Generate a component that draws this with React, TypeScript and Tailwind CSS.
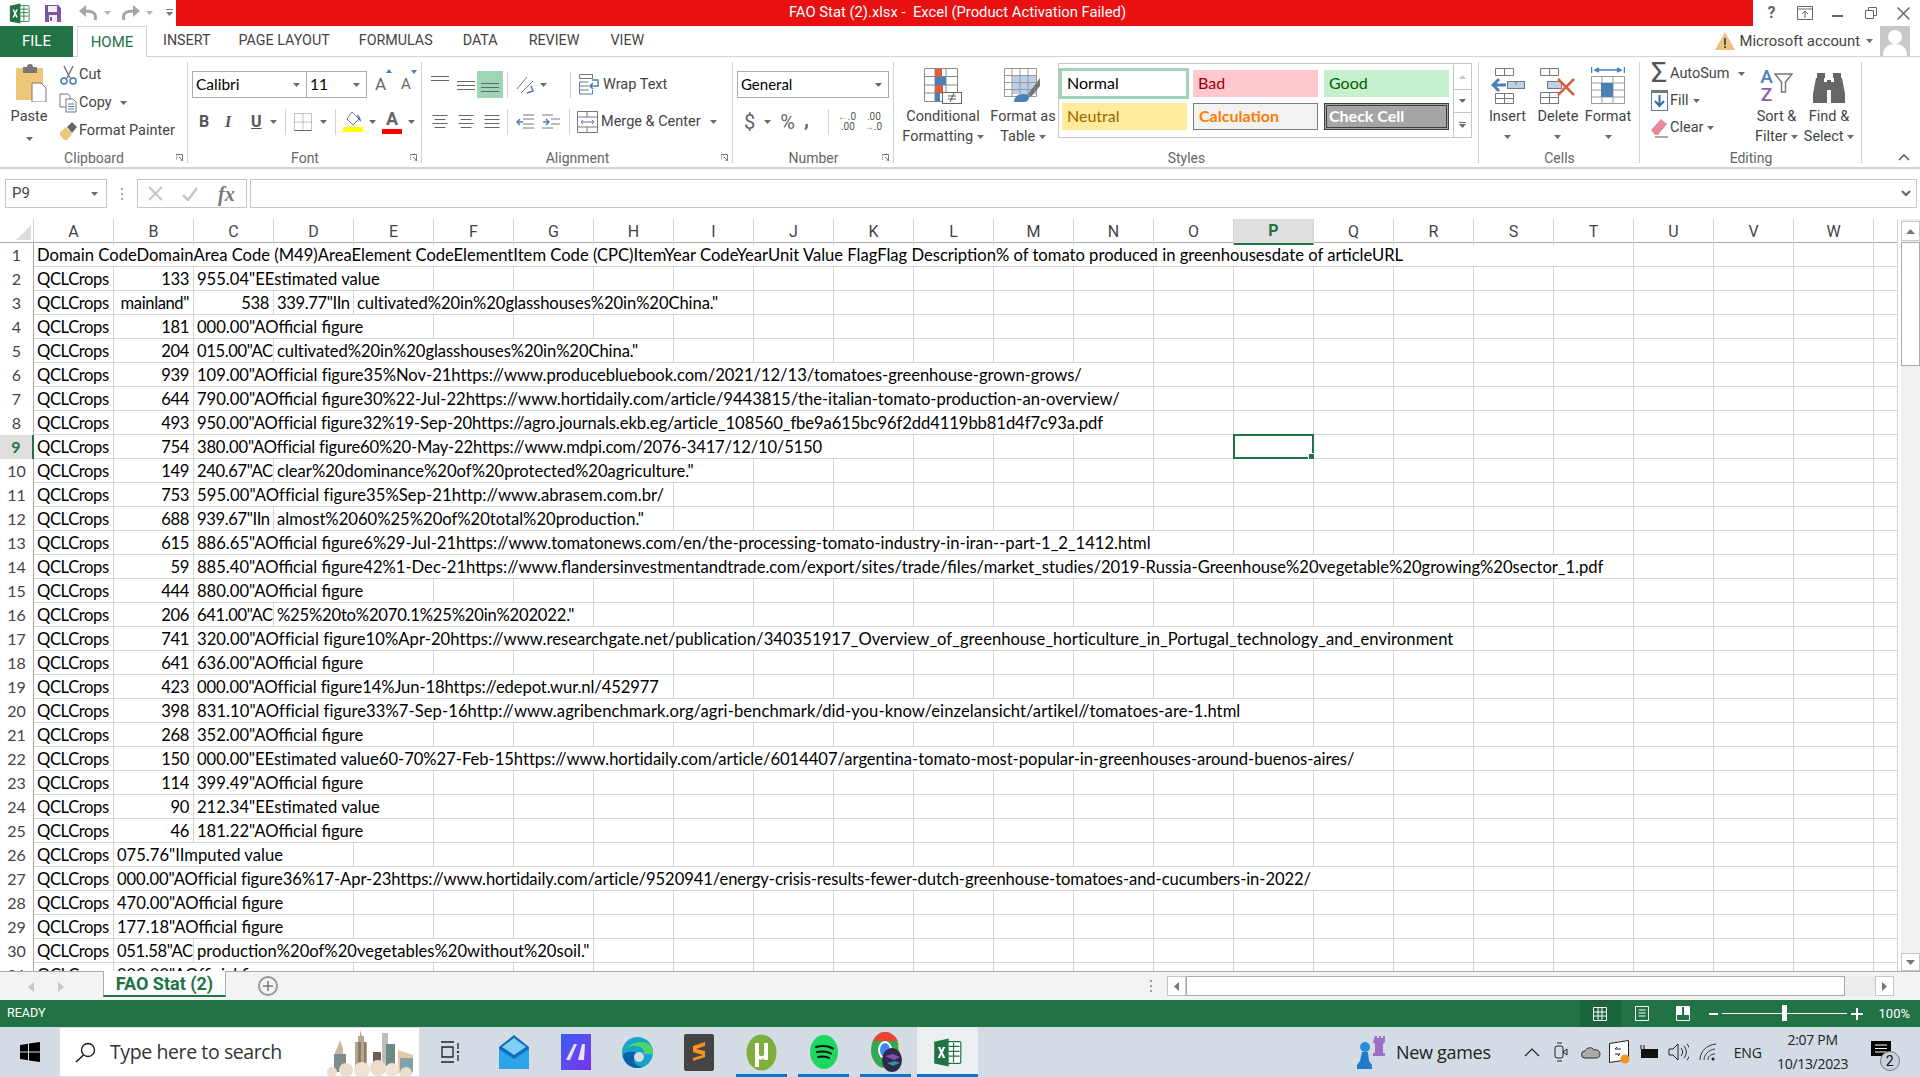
import type { ReactNode } from "react";

type Cell = [number, string, ("r" | "")?, string?];

const QCL: Cell = [1, "QCLCrops"];
const off = (n: string, v: string, span = 3, cls = ""): Cell[] => [QCL, [1, n, "r"], [span, v, "", cls]];

const rows: Cell[][] = [
  [[20, "Domain CodeDomainArea Code (M49)AreaElement CodeElementItem Code (CPC)ItemYear CodeYearUnit Value FlagFlag Description% of tomato produced in greenhousesdate of articleURL"]],
  off("133", '955.04"EEstimated value'),
  [QCL, [1, 'mainland"', "r"], [1, "538", "r"], [1, '339.77"IIn'], [5, 'cultivated%20in%20glasshouses%20in%20China."', "", "tracking-[-0.08px]"]],
  off("181", '000.00"AOfficial figure'),
  [QCL, [1, "204", "r"], [1, '015.00"AC'], [5, 'cultivated%20in%20glasshouses%20in%20China."', "", "tracking-[-0.08px]"]],
  off("939", '109.00"AOfficial figure35%Nov-21https://www.producebluebook.com/2021/12/13/tomatoes-greenhouse-grown-grows/', 12, "tracking-[-0.04px]"),
  off("644", '790.00"AOfficial figure30%22-Jul-22https://www.hortidaily.com/article/9443815/the-italian-tomato-production-an-overview/', 12),
  off("493", '950.00"AOfficial figure32%19-Sep-20https://agro.journals.ekb.eg/article_108560_fbe9a615bc96f2dd4119bb81d4f7c93a.pdf', 12, "tracking-[-0.08px]"),
  off("754", '380.00"AOfficial figure60%20-May-22https://www.mdpi.com/2076-3417/12/10/5150', 9, "tracking-[-0.19px]"),
  [QCL, [1, "149", "r"], [1, '240.67"AC'], [6, 'clear%20dominance%20of%20protected%20agriculture."']],
  off("753", '595.00"AOfficial figure35%Sep-21http://www.abrasem.com.br/', 6, "tracking-[0.07px]"),
  [QCL, [1, "688", "r"], [1, '939.67"IIn'], [5, 'almost%2060%25%20of%20total%20production."']],
  off("615", '886.65"AOfficial figure6%29-Jul-21https://www.tomatonews.com/en/the-processing-tomato-industry-in-iran--part-1_2_1412.html', 13),
  off("59", '885.40"AOfficial figure42%1-Dec-21https://www.flandersinvestmentandtrade.com/export/sites/trade/files/market_studies/2019-Russia-Greenhouse%20vegetable%20growing%20sector_1.pdf', 18),
  off("444", '880.00"AOfficial figure'),
  [QCL, [1, "206", "r"], [1, '641.00"AC'], [4, '%25%20to%2070.1%25%20in%202022."', "", "tracking-[-0.2px]"]],
  off("741", '320.00"AOfficial figure10%Apr-20https://www.researchgate.net/publication/340351917_Overview_of_greenhouse_horticulture_in_Portugal_technology_and_environment', 16, "tracking-[0.05px]"),
  off("641", '636.00"AOfficial figure'),
  off("423", '000.00"AOfficial figure14%Jun-18https://edepot.wur.nl/452977', 6, "tracking-[-0.1px]"),
  off("398", '831.10"AOfficial figure33%7-Sep-16http://www.agribenchmark.org/agri-benchmark/did-you-know/einzelansicht/artikel//tomatoes-are-1.html', 14, "tracking-[0.07px]"),
  off("268", '352.00"AOfficial figure'),
  off("150", '000.00"EEstimated value60-70%27-Feb-15https://www.hortidaily.com/article/6014407/argentina-tomato-most-popular-in-greenhouses-around-buenos-aires/', 15, "tracking-[-0.03px]"),
  off("114", '399.49"AOfficial figure'),
  off("90", '212.34"EEstimated value'),
  off("46", '181.22"AOfficial figure'),
  [QCL, [3, '075.76"IImputed value']],
  [QCL, [16, '000.00"AOfficial figure36%17-Apr-23https://www.hortidaily.com/article/9520941/energy-crisis-results-fewer-dutch-greenhouse-tomatoes-and-cucumbers-in-2022/', "", "tracking-[-0.08px]"]],
  [QCL, [3, '470.00"AOfficial figure']],
  [QCL, [3, '177.18"AOfficial figure']],
  [QCL, [1, '051.58"AC'], [5, 'production%20of%20vegetables%20without%20soil."']],
  [QCL, [3, '000.00"AOfficial figure']],
];

const letters = "ABCDEFGHIJKLMNOPQRSTUVW".split("");

const Caret = ({ className = "" }: { className?: string }) => (
  <svg width="7" height="4" viewBox="0 0 7 4" className={className}>
    <path d="M0 0h7L3.5 4z" fill="#6a6a6a" />
  </svg>
);

const Launcher = () => (
  <svg width="7" height="7" viewBox="0 0 7 7" className="absolute right-[5px] bottom-[6px]">
    <path d="M0 .5h6.5V7M0 0v6M3 3l4 4M4 7h3V4" stroke="#777" fill="none" />
  </svg>
);

const Group = ({ w, label, launcher, children }: { w: string; label: string; launcher?: boolean; children: ReactNode }) => (
  <div className={`${w} relative flex flex-col shrink-0`}>
    <div className="absolute right-0 top-[5px] bottom-[4px] w-px bg-[#d4d4d4]" />
    <div className="h-[92px] shrink-0 relative">{children}</div>
    <div className="h-[18px] shrink-0 flex items-center justify-center text-[14px] text-[#666]">{label}</div>
    {launcher && <Launcher />}
  </div>
);

const Lines = ({ widths, top = 0 }: { widths: number[]; top?: number }) => (
  <svg width="20" height="20" viewBox="0 0 20 20">
    {widths.map((w, i) => (
      <rect key={i} x={(20 - w) / 2} y={top + i * 4} width={w} height="1" fill="#666" />
    ))}
  </svg>
);

const Sep = () => <div className="w-px h-[26px] bg-[#d4d4d4]" />;

const ExcelLogo = ({ size = 24 }: { size?: number }) => (
  <svg width={size} height={size} viewBox="0 0 24 24">
    <rect x="10" y="3" width="13" height="18" rx="1" fill="#fff" stroke="#217346" />
    <path d="M13 7h9M13 11h9M13 15h9M17 4v16" stroke="#217346" />
    <path d="M1 3l12-2.5v23L1 21z" fill="#217346" />
    <path d="M4 7.5h2l1 2.7 1.2-2.7h1.900L8 12l2.200 4.500H8.200L7 13.600l-1.200 2.900H3.900L6 12z" fill="#fff" />
  </svg>
);

const WinBtn = ({ children }: { children: ReactNode }) => <div className="w-[33px] flex justify-center items-center">{children}</div>;

const TitleBar = () => (
  <div className="h-[26px] flex shrink-0">
    <div className="w-[176px] flex items-center shrink-0 pl-[9px]">
      <ExcelLogo size={21} />
      <svg width="18" height="19" viewBox="0 0 18 19" className="ml-[14px]">
        <path d="M1 1h13l3 3v14H1z" fill="#7b55a0" />
        <rect x="4" y="2" width="9" height="6" fill="#f3eef7" />
        <rect x="5" y="11" width="8" height="7" fill="#f3eef7" />
        <rect x="6" y="13" width="2" height="4" fill="#7b55a0" />
      </svg>
      <svg width="20" height="18" viewBox="0 0 20 18" className="ml-[16px]">
        <path d="M17 16c2-6-1-9-10-9H4" stroke="#a6a6a6" strokeWidth="3" fill="none" />
        <path d="M8 1L1 7l7 6z" fill="#a6a6a6" />
      </svg>
      <Caret className="ml-[6px] opacity-50" />
      <svg width="20" height="18" viewBox="0 0 20 18" className="ml-[10px]">
        <path d="M3 16C1 10 4 7 13 7h3" stroke="#a6a6a6" strokeWidth="3" fill="none" />
        <path d="M12 1l7 6-7 6z" fill="#a6a6a6" />
      </svg>
      <Caret className="ml-[5px] opacity-50" />
      <svg width="7" height="8" viewBox="0 0 7 8" className="ml-[13px]">
        <path d="M0 0h7v1H0zM0 3h7L3.500 7z" fill="#777" />
      </svg>
    </div>
    <div className="w-[1577px] bg-[#e81010] flex items-center justify-center text-white text-[14.800px] whitespace-pre pr-[14px] pb-[2px]">
      {"FAO Stat (2).xlsx -  Excel (Product Activation Failed)"}
    </div>
    <div className="flex-1 flex items-center text-[#666] pl-[2px]">
      <WinBtn><span className="font-bold text-[16px]">?</span></WinBtn>
      <WinBtn>
        <svg width="16" height="14" viewBox="0 0 16 14">
          <path d="M.5.500h15v13H.5zM.5 3h15M8 12V5M5 8l3-3 3 3" stroke="#666" fill="none" />
        </svg>
      </WinBtn>
      <WinBtn><div className="w-[11px] h-[2px] bg-[#666] mt-[6px]" /></WinBtn>
      <WinBtn>
        <svg width="12" height="12" viewBox="0 0 12 12">
          <path d="M.5 3.500h8v8h-8zM3.500 3.500v-3h8v8h-3" stroke="#666" fill="none" />
        </svg>
      </WinBtn>
      <WinBtn>
        <svg width="13" height="13" viewBox="0 0 13 13">
          <path d="M.5.5l12 12M12.500.5l-12 12" stroke="#666" strokeWidth="1.500" />
        </svg>
      </WinBtn>
    </div>
  </div>
);

const TabRow = () => (
  <div className="h-[31px] flex shrink-0 border-b border-[#d4d4d4] relative">
    <div className="w-[73px] h-[31px] bg-[#217346] text-white text-[15px] flex items-center justify-center shrink-0">FILE</div>
    <div className="ml-[4px] w-[70px] h-[31px] bg-white border border-b-0 border-[#d4d4d4] text-[#217346] text-[15px] flex items-center justify-center shrink-0">HOME</div>
    <div className="flex text-[14.300px] text-[#444] items-center h-[30px]">
      <span className="ml-[16px]">INSERT</span>
      <span className="ml-[28px]">PAGE LAYOUT</span>
      <span className="ml-[29px]">FORMULAS</span>
      <span className="ml-[30px]">DATA</span>
      <span className="ml-[31px]">REVIEW</span>
      <span className="ml-[31px]">VIEW</span>
    </div>
    <div className="ml-auto flex items-center h-[30px] pr-[10px]">
      <svg width="20" height="18" viewBox="0 0 20 18">
        <path d="M10 0l10 18H0z" fill="#ecc27e" />
        <rect x="9" y="6" width="2" height="7" fill="#555" />
        <rect x="9" y="14" width="2" height="2" fill="#555" />
      </svg>
      <span className="text-[14.800px] text-[#444] ml-[5px]">Microsoft account</span>
      <Caret className="ml-[6px]" />
      <svg width="30" height="30" viewBox="0 0 30 30" className="ml-[7px]">
        <rect width="30" height="30" fill="#c8c8c8" />
        <circle cx="15" cy="11" r="7" fill="#fff" />
        <path d="M3 30c0-9 5-12 12-12s12 3 12 12z" fill="#fff" />
      </svg>
    </div>
  </div>
);

const ToolRow = ({ icon, text, caret, h = "h-[28px]", gap = "ml-[8px]" }: { icon: ReactNode; text: string; caret?: boolean; h?: string; gap?: string }) => (
  <div className={`${h} flex items-center text-[14.500px] text-[#444] whitespace-nowrap`}>
    <div className="w-[22px] flex justify-center">{icon}</div>
    <span>{text}</span>
    {caret && <Caret className={gap} />}
  </div>
);

const Clipboard = () => (
  <Group w="w-[188px]" label="Clipboard" launcher>
    <div className="flex pl-[10px] pt-[7px]">
      <div className="w-[38px] flex flex-col items-center">
        <svg width="36" height="38" viewBox="0 0 36 38">
          <rect x="5" y="4" width="27" height="32" rx="1" fill="#eec77b" />
          <path d="M12 3h4a3 3 0 016 0h4v6H12z" fill="#777" />
          <path d="M21 19h9l5 5v14H21z" fill="#fff" stroke="#777" />
        </svg>
        <span className="text-[14.500px] text-[#444] mt-[4px]">Paste</span>
        <Caret className="mt-[9px]" />
      </div>
      <div className="ml-[9px] -mt-[3px]">
        <ToolRow
          text="Cut"
          icon={
            <svg width="17" height="20" viewBox="0 0 17 20">
              <path d="M4 1l6 12M13 1L7 13" stroke="#777" strokeWidth="1.500" />
              <circle cx="4" cy="16" r="3" fill="none" stroke="#3f78b5" strokeWidth="1.500" />
              <circle cx="13" cy="16" r="3" fill="none" stroke="#3f78b5" strokeWidth="1.500" />
            </svg>
          }
        />
        <ToolRow
          text="Copy"
          caret
          icon={
            <svg width="18" height="20" viewBox="0 0 18 20">
              <path d="M1 1h8l2 2v11H1z" fill="#fff" stroke="#777" />
              <path d="M7 6h7l3 3v10H7z" fill="#fff" stroke="#777" />
              <path d="M9 11h6M9 13.500h6M9 16h6" stroke="#4a7fb8" />
            </svg>
          }
        />
        <ToolRow
          text="Format Painter"
          icon={
            <svg width="18" height="18" viewBox="0 0 18 18">
              <path d="M1 10l6-5 6 7-5 6H5L1 13z" fill="#eec77b" />
              <path d="M8 5l5-5 5 5-5 6z" fill="#666" />
            </svg>
          }
        />
      </div>
    </div>
  </Group>
);

const FontGroup = () => (
  <Group w="w-[234px]" label="Font" launcher>
    <div className="pl-[4px] pt-[14px]">
      <div className="flex items-center h-[27px]">
        <div className="w-[115px] h-[27px] border border-[#ababab] flex items-center justify-between px-[3px] pr-[6px] text-[15.500px] text-black [font-family:Lato,sans-serif]">
          Calibri <Caret />
        </div>
        <div className="w-[60px] h-[27px] border border-l-0 border-[#ababab] flex items-center justify-between px-[3px] pr-[6px] text-[15.500px] text-black [font-family:Lato,sans-serif]">
          11 <Caret />
        </div>
        <span className="ml-[8px] text-[17px] text-[#666] relative">
          A<span className="absolute -top-[3px] -right-[6px]"><svg width="6" height="4" viewBox="0 0 6 4"><path d="M0 4h6L3 0z" fill="#4a7fb8" /></svg></span>
        </span>
        <span className="ml-[15px] text-[15px] text-[#666] relative">
          A<span className="absolute -top-[3px] -right-[6px]"><svg width="6" height="4" viewBox="0 0 6 4"><path d="M0 0h6L3 4z" fill="#4a7fb8" /></svg></span>
        </span>
      </div>
      <div className="flex items-center h-[27px] mt-[10px] text-[#555]">
        <span className="ml-[7px] w-[26px] font-bold text-[16px]">B</span>
        <span className="w-[26px] italic font-bold text-[16px] [font-family:'Liberation_Serif',serif]">I</span>
        <span className="w-[19px] font-bold text-[16px] underline">U</span>
        <Caret />
        <div className="ml-[8px]"><Sep /></div>
        <svg width="18" height="18" viewBox="0 0 18 18" className="ml-[8px]">
          <path d="M.5.500h17v17H.5zM9 .5v17M.5 9h17" stroke="#888" strokeDasharray="1 1" fill="none" />
          <path d="M.5 17.500h17" stroke="#666" />
        </svg>
        <Caret className="ml-[8px]" />
        <div className="ml-[8px]"><Sep /></div>
        <div className="ml-[7px] flex flex-col items-center w-[20px]">
          <svg width="18" height="16" viewBox="0 0 18 16">
            <path d="M8 1l7 7-6 6-6-6z" fill="#fff" stroke="#777" />
            <path d="M13 3c3 2 4 5 4 8l-3-3z" fill="#4a7fb8" />
          </svg>
          <div className="w-[20px] h-[5px] bg-[#ffff00]" />
        </div>
        <Caret className="ml-[6px]" />
        <div className="ml-[6px] flex flex-col items-center w-[20px] h-[24px]">
          <span className="text-[18px] leading-[18px] font-bold text-[#666]">A</span>
          <div className="w-[20px] h-[5px] bg-[#ff0000] mt-[1px]" />
        </div>
        <Caret className="ml-[6px]" />
      </div>
    </div>
  </Group>
);

const Alignment = () => (
  <Group w="w-[311px]" label="Alignment" launcher>
    <div className="pt-[14px] pl-[8px]">
      <div className="flex items-center h-[27px]">
        <div className="-mt-[6px]"><Lines widths={[18, 18]} top={4} /></div>
        <div className="ml-[6px]"><Lines widths={[18, 18, 18]} top={6} /></div>
        <div className="ml-[1px] w-[26px] h-[27px] bg-[#9fd5b7] flex items-center justify-center"><Lines widths={[18, 18, 18]} top={8} /></div>
        <div className="ml-[4px]"><Sep /></div>
        <svg width="20" height="20" viewBox="0 0 20 20" className="ml-[7px]">
          <path d="M2 14L12 2M6 18L18 6" stroke="#777" />
          <path d="M12 18l6-2-2-5" stroke="#4a7fb8" strokeWidth="1.500" fill="none" />
        </svg>
        <Caret className="ml-[5px]" />
        <div className="ml-[23px]"><Sep /></div>
        <svg width="21" height="21" viewBox="0 0 21 21" className="ml-[8px]">
          <path d="M.5.500h13v4H.5zM.5 8h9M.5 12h9M.5 16h9" stroke="#777" fill="none" />
          <path d="M.5 8v12h13v-4" stroke="#4a7fb8" fill="none" />
          <path d="M13 6h6v6h-7M14 9l-3 3 3 3" stroke="#4a7fb8" strokeWidth="1.500" fill="none" />
        </svg>
        <span className="ml-[3px] text-[14.500px] text-[#444] pt-[1px]">Wrap Text</span>
      </div>
      <div className="flex items-center h-[27px] mt-[10px]">
        <Lines widths={[15, 11, 15, 11]} top={3} />
        <div className="ml-[6px]"><Lines widths={[15, 11, 15, 11]} top={3} /></div>
        <div className="ml-[6px]"><Lines widths={[15, 15, 15, 15]} top={3} /></div>
        <div className="ml-[5px]"><Sep /></div>
        <svg width="18" height="16" viewBox="0 0 18 16" className="ml-[8px]">
          <path d="M7 1h11M7 5h11M7 10h11M7 14h11" stroke="#777" />
          <path d="M7 8H1M4 5L1 8l3 3" stroke="#4a7fb8" strokeWidth="1.500" fill="none" />
        </svg>
        <svg width="18" height="16" viewBox="0 0 18 16" className="ml-[8px]">
          <path d="M0 1h11M9 5h9M9 10h9M0 14h11" stroke="#777" />
          <path d="M1 8h6M4 5l3 3-3 3" stroke="#4a7fb8" strokeWidth="1.500" fill="none" />
        </svg>
        <div className="ml-[9px]"><Sep /></div>
        <svg width="21" height="22" viewBox="0 0 21 22" className="ml-[7px]">
          <path d="M.5.500h20v21H.5zM.5 6h20M.5 16h20M10 .5V6M10 16v5" stroke="#777" fill="none" />
          <path d="M4 11h13M6 9l-2 2 2 2M15 9l2 2-2 2" stroke="#4a7fb8" fill="none" />
        </svg>
        <span className="ml-[3px] text-[14.500px] text-[#444]">Merge &amp; Center</span>
        <Caret className="ml-[9px]" />
      </div>
    </div>
  </Group>
);

const NumberGroup = () => (
  <Group w="w-[161px]" label="Number" launcher>
    <div className="pt-[14px] pl-[4px]">
      <div className="w-[152px] h-[27px] border border-[#ababab] flex items-center justify-between px-[3px] pr-[6px] text-[15px] text-black [font-family:Lato,sans-serif]">
        General <Caret />
      </div>
      <div className="flex items-center h-[27px] mt-[10px] text-[#666]">
        <span className="ml-[7px] text-[20px]">$</span>
        <Caret className="ml-[9px]" />
        <span className="ml-[9px] text-[20px]">%</span>
        <span className="ml-[9px] text-[20px] font-bold -mt-[6px]">,</span>
        <div className="ml-[19px]"><Sep /></div>
        <div className="ml-[9px] w-[17px] text-[10px] leading-[10px] text-right text-[#555]"><span className="text-[#4a7fb8]">←</span>.0<br />.00</div>
        <div className="ml-[9px] w-[17px] text-[10px] leading-[10px] text-right text-[#555]">.00<br /><span className="text-[#4a7fb8]">→</span>.0</div>
      </div>
    </div>
  </Group>
);

const CondIcon = () => (
  <svg width="38" height="36" viewBox="0 0 38 36">
    <path d="M.5.500h33v33H.5zM.5 8.500h33M.5 17h33M.5 25h33M11 .5v33M22 .5v33" stroke="#888" fill="none" />
    <rect x="11" y="1" width="7" height="8" fill="#d9603b" />
    <rect x="11" y="9" width="11" height="8" fill="#4a7fb8" />
    <rect x="11" y="17" width="8" height="8" fill="#d9603b" />
    <rect x="11" y="25" width="5" height="8" fill="#4a7fb8" />
    <rect x="18.500" y="24.500" width="19" height="11" fill="#fff" stroke="#666" />
    <path d="M24 31h8M24 28h8M30 25l-4 9" stroke="#555" />
  </svg>
);

const TableIcon = () => (
  <svg width="38" height="36" viewBox="0 0 38 36">
    <rect x="8" y="8" width="24" height="18" fill="#bcd0e8" />
    <path d="M.5.500h32v28H.5zM.5 7.500h32M.5 14.500h32M.5 21.500h32M8 .5v28M16 .5v28M24 .5v28" stroke="#999" fill="none" />
    <path d="M36 10L24 26l3 3 9-11z" fill="#777" />
    <path d="M10 34c0-6 6-10 15-7 1 3-1 7-5 7z" fill="#4a7fb8" />
  </svg>
);

const StyleCell = ({ cls, text, pad = "pl-[5px]" }: { cls: string; text: string; pad?: string }) => (
  <div className={`w-[125px] h-[27px] flex items-center pb-[2px] text-[16px] [font-family:Lato,sans-serif] ${pad} ${cls}`}>{text}</div>
);

const BigBtn = ({ w, icon, lines }: { w: string; icon: ReactNode; lines: ReactNode }) => (
  <div className={`${w} flex flex-col items-center pt-[11px] shrink-0`}>
    <div className="h-[36px] flex items-center">{icon}</div>
    <div className="mt-[3px] text-[14.500px] leading-[20px] text-[#444] text-center whitespace-nowrap">{lines}</div>
  </div>
);

const Styles = () => (
  <Group w="w-[585px]" label="Styles">
    <div className="flex">
      <BigBtn w="w-[88px] ml-[5px]" icon={<CondIcon />} lines={<>Conditional<br />Formatting <Caret className="inline" /></>} />
      <BigBtn w="w-[72px]" icon={<TableIcon />} lines={<>Format as<br />Table <Caret className="inline" /></>} />
      <div className="ml-[-1px] mt-[6px] h-[75px] w-[414px] border border-[#c6c6c6] flex shrink-0">
        <div className="flex-1 grid grid-cols-[125px_125px_125px] gap-x-[6px] gap-y-[6px] pl-[3px] pt-[6px] content-start">
          <div className="w-[130px] h-[31px] -ml-[3px] -my-[2px] border-[3px] border-[#9fd5b7] bg-white flex items-center pl-[5px] pb-[2px] text-[16px] text-black [font-family:Lato,sans-serif]">Normal</div>
          <StyleCell cls="bg-[#ffc7ce] text-[#9c0006]" text="Bad" />
          <StyleCell cls="bg-[#c6efce] text-[#006100]" text="Good" />
          <StyleCell cls="bg-[#ffeb9c] text-[#9c6500]" text="Neutral" />
          <StyleCell cls="bg-[#f2f2f2] border border-[#7f7f7f] text-[#fa7d00] font-bold" text="Calculation" />
          <StyleCell pad="pl-[2px]" cls="bg-[#a5a5a5] border-[3px] border-double border-[#3f3f3f] text-white font-bold" text="Check Cell" />
        </div>
        <div className="w-[18px] border-l border-[#c6c6c6] flex flex-col shrink-0">
          <div className="h-[26px] flex items-center justify-center border-b border-[#c6c6c6]"><svg width="7" height="4" viewBox="0 0 7 4"><path d="M0 4h7L3.500 0z" fill="#c6c6c6" /></svg></div>
          <div className="h-[23px] flex items-center justify-center border-b border-[#c6c6c6]"><Caret /></div>
          <div className="flex-1 flex flex-col items-center justify-center"><div className="w-[7px] h-px bg-[#666] mb-[1px]" /><Caret /></div>
        </div>
      </div>
    </div>
  </Group>
);

const Cells = () => (
  <Group w="w-[161px]" label="Cells">
    <div className="flex pl-[3px]">
      <BigBtn
        w="w-[51px]"
        icon={
          <svg width="34" height="36" viewBox="0 0 34 36">
            <path d="M4.500.500h18v7h-18zM13.500.500v7M4.500 25.500h18v10h-18zM4.500 30.500h18M13.500 25.500v10" stroke="#777" fill="none" />
            <rect x="16.500" y="13.500" width="17" height="7" fill="#bcd0e8" stroke="#777" />
            <path d="M25 17v-3.500" stroke="#777" />
            <path d="M15 17H3M8 11l-6 6 6 6" stroke="#4a7fb8" strokeWidth="3" fill="none" />
          </svg>
        }
        lines={<>Insert<br /><Caret className="inline" /></>}
      />
      <BigBtn
        w="w-[50px]"
        icon={
          <svg width="36" height="36" viewBox="0 0 36 36">
            <path d="M.5.500h18v7h-18zM9.500.500v7M.5 24.500h18v11h-18zM.5 29.500h18M9.500 24.500v11" stroke="#777" fill="none" />
            <rect x="7.500" y="13.500" width="14" height="7" fill="#bcd0e8" stroke="#777" />
            <path d="M18 11l16 16M34 11L18 27" stroke="#d9603b" strokeWidth="2.500" />
          </svg>
        }
        lines={<>Delete<br /><Caret className="inline" /></>}
      />
      <BigBtn
        w="w-[50px]"
        icon={
          <svg width="34" height="38" viewBox="0 0 34 38">
            <path d="M.5 9.500h33v27H.5zM.5 16h33M.5 23h33M.5 30h33M11 9.500v27M22 9.500v27" stroke="#999" fill="none" />
            <rect x="10" y="16" width="12" height="14" fill="#4a7fb8" />
            <path d="M4 3h26M8 1L4 3l4 2M26 1l4 2-4 2M.5 0v6M33.500 0v6" stroke="#4a7fb8" strokeWidth="1.500" fill="none" />
          </svg>
        }
        lines={<>Format<br /><Caret className="inline" /></>}
      />
    </div>
  </Group>
);

const Editing = () => (
  <Group w="w-[222px]" label="Editing">
    <div className="flex pl-[8px]">
      <div className="pt-[3px] w-[102px] shrink-0">
        <ToolRow
          h="h-[27px]"
          text="AutoSum"
          caret
          icon={<span className="text-[28px] leading-none text-[#555] -mt-[2px]">Σ</span>}
        />
        <ToolRow
          h="h-[27px]"
          gap="ml-[4px]"
          text="Fill"
          caret
          icon={
            <svg width="17" height="21" viewBox="0 0 17 21">
              <rect x=".5" y=".5" width="16" height="20" fill="#fff" stroke="#4a7fb8" />
              <rect width="17" height="3" fill="#777" />
              <path d="M8.500 5v11M4 11l4.500 5 4.500-5" stroke="#2f6cab" strokeWidth="2" fill="none" />
            </svg>
          }
        />
        <ToolRow
          h="h-[27px]"
          gap="ml-[4px]"
          text="Clear"
          caret
          icon={
            <svg width="18" height="20" viewBox="0 0 18 20">
              <path d="M1 12L11 1l6 5-9 11H5z" fill="#e88a9c" />
              <path d="M5 19h13" stroke="#555" />
            </svg>
          }
        />
      </div>
      <BigBtn
        w="w-[53px]"
        icon={
          <div className="flex items-center h-[36px]">
            <div className="flex flex-col items-center text-[19px] leading-[18px] font-medium">
              <span className="text-[#4a7fb8]">A</span>
              <span className="text-[#8a5fb5]">Z</span>
            </div>
            <svg width="19" height="20" viewBox="0 0 19 20" className="ml-[1px] -mt-[6px]">
              <path d="M1 1h17l-6.500 8v10h-4V9z" fill="#fff" stroke="#777" strokeWidth="1.500" />
            </svg>
          </div>
        }
        lines={<>Sort &amp;<br />Filter <Caret className="inline" /></>}
      />
      <BigBtn
        w="w-[52px]"
        icon={
          <svg width="34" height="36" viewBox="0 0 34 36">
            <path d="M5 5h8v5h-1v4h3v-2h4v2h3v-4h-1V5h8v5h1l3 16v9H19V22h-4v13H1v-9l3-16h1z" fill="#666" />
          </svg>
        }
        lines={<>Find &amp;<br />Select <Caret className="inline" /></>}
      />
    </div>
  </Group>
);

const Ribbon = () => (
  <div className="h-[112px] flex shrink-0 border-b-2 border-[#d4d4d4] relative">
    <Clipboard />
    <FontGroup />
    <Alignment />
    <NumberGroup />
    <Styles />
    <Cells />
    <Editing />
    <svg width="12" height="7" viewBox="0 0 12 7" className="absolute right-[10px] bottom-[6px]">
      <path d="M1 6l5-5 5 5" stroke="#555" strokeWidth="1.500" fill="none" />
    </svg>
  </div>
);

const FormulaBar = () => (
  <div className="h-[50px] flex items-start pt-[10px] shrink-0">
    <div className="ml-[5px] w-[102px] h-[29px] border border-[#c6c6c6] flex items-center justify-between pl-[6px] pr-[8px] text-[15px] text-[#444]">
      P9 <Caret />
    </div>
    <div className="w-[30px] h-[29px] flex flex-col items-center justify-center gap-[3px] shrink-0">
      <div className="w-[2px] h-[2px] bg-[#aaa]" /><div className="w-[2px] h-[2px] bg-[#aaa]" /><div className="w-[2px] h-[2px] bg-[#aaa]" />
    </div>
    <div className="w-[110px] h-[29px] border border-[#c6c6c6] flex items-center shrink-0">
      <svg width="15" height="15" viewBox="0 0 15 15" className="ml-[10px]"><path d="M1 1l13 13M14 1L1 14" stroke="#c6c6c6" strokeWidth="2" /></svg>
      <svg width="16" height="14" viewBox="0 0 16 14" className="ml-[19px]"><path d="M1 8l5 5 9-12" stroke="#c6c6c6" strokeWidth="2.500" fill="none" /></svg>
      <span className="ml-[20px] italic font-bold text-[20px] text-[#777] [font-family:'Liberation_Serif',serif]">fx</span>
    </div>
    <div className="ml-[3px] flex-1 mr-[3px] h-[29px] border border-[#c6c6c6] flex items-center justify-end pr-[5px]">
      <svg width="10" height="7" viewBox="0 0 10 7"><path d="M1 1l4 4 4-4" stroke="#666" strokeWidth="2" fill="none" /></svg>
    </div>
  </div>
);

const SheetRow = ({ cells, index }: { cells: Cell[]; index: number }) => {
  const used = cells.reduce((n, c) => n + c[0], 0);
  const blanks = Array.from({ length: 24 - used }, (_, i) => used + i);
  const selected = index === 8;
  return (
    <div className="flex h-[24px] shrink-0">
      <div
        className={`w-[34px] shrink-0 flex items-center justify-center text-[16px] border-r ${
          selected ? "bg-[#dfdfdf] text-[#217346] font-bold border-[#217346] border-r-2" : "text-[#444] border-[#ababab]"
        }`}
      >
        {index + 1}
      </div>
      <div className="grid grid-cols-[repeat(23,80px)_24px] flex-1">
        {cells.map((c, i) => (
          <div
            key={i}
            style={{ gridColumn: `span ${c[0]}` }}
            className={`border-r border-b border-[#d4d4d4] overflow-hidden whitespace-nowrap pl-[3px] pr-[4px] leading-[25px] ${c[2] === "r" ? "text-right" : ""} ${c[0] === 1 ? "tracking-[-0.4px]" : ""} ${c[3] ?? ""}`}
          >
            {c[1]}
          </div>
        ))}
        {blanks.map((b) => (
          <div key={b} className="border-r border-b border-[#d4d4d4] relative">
            {selected && b === 15 && (
              <div className="absolute -left-px -top-px w-[81px] h-[25px] border-2 border-[#217346] z-10">
                <div className="absolute -right-[3px] -bottom-[3px] w-[5px] h-[5px] bg-[#217346] border border-white box-content" />
              </div>
            )}
          </div>
        ))}
      </div>
    </div>
  );
};

const Sheet = () => (
  <div className="flex h-[752px] shrink-0 overflow-hidden">
    <div className="w-[1898px] shrink-0 flex flex-col overflow-hidden">
      <div className="flex h-[23px] shrink-0 border-b border-[#ababab] box-content">
        <div className="w-[34px] shrink-0 border-r border-[#d4d4d4] flex items-end justify-end p-[2px]">
          <svg width="15" height="15" viewBox="0 0 15 15"><path d="M15 0v15H0z" fill="#dcdcdc" /></svg>
        </div>
        <div className="grid grid-cols-[repeat(23,80px)_24px] flex-1 text-[16px] text-[#444]">
          {letters.map((l) => (
            <div
              key={l}
              className={`flex items-center justify-center border-r border-[#d4d4d4] ${
                l === "P" ? "bg-[#dfdfdf] text-[#217346] font-bold border-b-2 border-b-[#217346]" : ""
              }`}
            >
              {l}
            </div>
          ))}
          <div className="border-r border-[#d4d4d4]" />
        </div>
      </div>
      <div className="[font-family:Lato,sans-serif] text-[16.600px] text-black">
        {rows.map((cells, i) => (
          <SheetRow key={i} cells={cells} index={i} />
        ))}
      </div>
    </div>
    <div className="ml-[3px] flex-1 flex flex-col pt-[2px] bg-[#f0f0f0]">
      <div className="h-[20px] bg-white border border-[#c6c6c6] flex items-center justify-center shrink-0">
        <svg width="9" height="5" viewBox="0 0 9 5"><path d="M0 5h9L4.500 0z" fill="#777" /></svg>
      </div>
      <div className="h-[124px] bg-white border border-[#ababab] mt-[1px] shrink-0" />
      <div className="flex-1" />
      <div className="h-[18px] bg-white border border-[#c6c6c6] flex items-center justify-center shrink-0">
        <svg width="9" height="5" viewBox="0 0 9 5"><path d="M0 0h9L4.500 5z" fill="#777" /></svg>
      </div>
    </div>
  </div>
);

const SheetTabs = () => (
  <div className="h-[29px] flex bg-[#f3f3f3] border-t border-[#ababab] shrink-0 box-border">
    <svg width="6" height="10" viewBox="0 0 6 10" className="ml-[28px] mt-[10px]"><path d="M6 0v10L0 5z" fill="#c6c6c6" /></svg>
    <svg width="6" height="10" viewBox="0 0 6 10" className="ml-[24px] mt-[10px]"><path d="M0 0v10l6-5z" fill="#c6c6c6" /></svg>
    <div className="ml-[39px] w-[123px] h-[26px] bg-white border-x border-[#ababab] border-b-2 border-b-[#217346] flex items-center justify-center font-bold text-[#217346] text-[18px] -mt-px">
      FAO Stat (2)
    </div>
    <div className="ml-[32px] mt-[4px] w-[20px] h-[20px] rounded-full border-2 border-[#999] flex items-center justify-center text-[#777]">
      <svg width="10" height="10" viewBox="0 0 10 10"><path d="M5 0v10M0 5h10" stroke="#777" strokeWidth="1.500" /></svg>
    </div>
    <div className="ml-[872px] mt-[8px] flex flex-col gap-[3px]">
      <div className="w-[2px] h-[2px] bg-[#999]" /><div className="w-[2px] h-[2px] bg-[#999]" /><div className="w-[2px] h-[2px] bg-[#999]" />
    </div>
    <div className="ml-[15px] mt-[4px] w-[19px] h-[20px] bg-white border border-[#c6c6c6] flex items-center justify-center shrink-0">
      <svg width="5" height="9" viewBox="0 0 5 9"><path d="M5 0v9L0 4.500z" fill="#777" /></svg>
    </div>
    <div className="mt-[4px] w-[659px] h-[20px] bg-white border border-[#ababab] shrink-0" />
    <div className="mt-[4px] w-[30px] h-[20px] bg-[#ececec] shrink-0" />
    <div className="mt-[4px] w-[19px] h-[20px] bg-white border border-[#c6c6c6] flex items-center justify-center shrink-0">
      <svg width="5" height="9" viewBox="0 0 5 9"><path d="M0 0v9l5-4.500z" fill="#777" /></svg>
    </div>
  </div>
);

const StatusBar = () => (
  <div className="h-[27px] bg-[#217346] flex items-center text-white shrink-0">
    <span className="ml-[7px] text-[12.500px]">READY</span>
    <div className="ml-auto w-[41px] h-[27px] bg-[#19643b] flex items-center justify-center">
      <svg width="14" height="14" viewBox="0 0 14 14"><path d="M.5.500h13v13H.5zM5 .5v13M9 .5v13M.5 5h13M.5 9h13" stroke="#fff" fill="none" /></svg>
    </div>
    <svg width="14" height="15" viewBox="0 0 14 15" className="ml-[14px]"><path d="M.5.500h13v14H.5zM3.500 4h7M3.500 7h7M3.500 10h7" stroke="#fff" fill="none" /></svg>
    <svg width="14" height="15" viewBox="0 0 14 15" className="ml-[27px]"><path d="M.5.500h13v14H.5z" stroke="#fff" fill="none" /><path d="M1 1h5v8H1zM8 1h5v8H8z" fill="#fff" /></svg>
    <div className="ml-[19px] w-[9px] h-[2px] bg-white" />
    <div className="ml-[4px] w-[125px] h-px bg-white relative">
      <div className="absolute left-[60px] -top-[8px] w-[5px] h-[16px] bg-white" />
    </div>
    <svg width="12" height="12" viewBox="0 0 12 12" className="ml-[4px]"><path d="M6 0v12M0 6h12" stroke="#fff" strokeWidth="2" /></svg>
    <span className="ml-[16px] mr-[10px] text-[13px]">100%</span>
  </div>
);

const Skyline = () => (
  <svg width="97" height="48" viewBox="0 0 97 48" className="ml-auto">
    <path d="M15 20l3-8 3 8v24h-8V24z" fill="#c9b8a4" />
    <rect x="12" y="26" width="12" height="18" fill="#7b8d8a" />
    <path d="M33 26V14h3V8h2V2l2 6h2v6h3v30H33z" fill="#b7a68f" />
    <path d="M36 14h3v30h-3zM42 14h2v30h-2z" fill="#8c7b67" />
    <rect x="51" y="24" width="8" height="20" fill="#6b5f55" />
    <rect x="60" y="5" width="6" height="38" fill="#b9bec0" />
    <rect x="64" y="16" width="9" height="28" fill="#6e8a80" />
    <path d="M76 22l15 5v18H76z" fill="#e4c9a3" />
    <rect x="78" y="30" width="13" height="14" fill="#7fa3a8" />
    <circle cx="10" cy="44" r="5" fill="#ecdcc9" />
    <circle cx="24" cy="42" r="7" fill="#ecdcc9" />
    <circle cx="40" cy="42" r="8" fill="#f0e3d3" />
    <circle cx="56" cy="40" r="8" fill="#ecdcc9" />
    <circle cx="70" cy="42" r="7" fill="#f0e3d3" />
    <circle cx="84" cy="45" r="6" fill="#ecdcc9" />
  </svg>
);

const Running = ({ w, ml, children, active }: { w: string; ml: string; children: ReactNode; active?: boolean }) => (
  <div className={`${w} ${ml} h-[50px] shrink-0 flex items-center justify-center relative ${active ? "bg-[#eceff2]" : ""}`}>
    {children}
  </div>
);

const Underline = () => <div className="absolute left-0 right-0 bottom-0 h-[3px] bg-[#0078d4]" />;

const Taskbar = () => (
  <div className="h-[50px] bg-[#d3dce4] flex items-center shrink-0 relative">
    <svg width="20" height="20" viewBox="0 0 20 20" className="ml-[20px] shrink-0">
      <path d="M0 3l8-1.200V9.500H0zM9 1.600L20 0v9.500H9zM0 10.500h8v7.700L0 17zM9 10.500h11V20L9 18.400z" fill="#000" />
    </svg>
    <div className="ml-[20px] w-[359px] h-[48px] bg-white flex items-center shrink-0">
      <svg width="21" height="21" viewBox="0 0 21 21" className="ml-[15px]">
        <circle cx="13" cy="8" r="6.500" fill="none" stroke="#111" strokeWidth="1.300" />
        <path d="M8.500 13L1 20" stroke="#111" strokeWidth="1.500" />
      </svg>
      <span className="ml-[14px] text-[19.500px] text-[#333] [font-family:'Open_Sans',sans-serif] tracking-[-0.4px]">Type here to search</span>
      <Skyline />
    </div>
    <svg width="20" height="22" viewBox="0 0 20 22" className="ml-[21px] shrink-0">
      <path d="M1 1h13M1 21h13M2 6h11v10H2zM18 2v6M18 14v6" stroke="#222" strokeWidth="1.300" fill="none" />
      <rect x="17" y="10" width="2" height="2" fill="#222" />
    </svg>
    <svg width="30" height="34" viewBox="0 0 30 34" className="ml-[39px] shrink-0">
      <path d="M15 0L30 12v22H0V12z" fill="#0f6cbd" />
      <path d="M0 14l15 10 15-10v20H0z" fill="#2aa6e8" />
      <path d="M3 12L15 3l12 9-12 8z" fill="#7fd0f5" />
    </svg>
    <div className="ml-[32px] w-[30px] h-[36px] bg-gradient-to-br from-[#2b5df5] to-[#7a2ff0] flex items-center justify-center shrink-0">
      <svg width="20" height="16" viewBox="0 0 20 16"><path d="M8 0h3L4 16H0zM16 0h3l-1 16h-6z" fill="#fff" fillOpacity=".85" /></svg>
    </div>
    <svg width="31" height="31" viewBox="0 0 31 31" className="ml-[31px] shrink-0">
      <circle cx="15.500" cy="15.500" r="15.500" fill="#16a5c9" />
      <path d="M31 16C31 8 25 5 19 5 10 5 3 10 1 18 3 9 11 8 15 9c5 1 8 4 7 8h9z" fill="#4fd36b" />
      <path d="M1 18c0 7 7 13 14 13 2 0 4-.5 6-1.500-5 .5-10-3-9-8 .5-3 3-5 6-5-7-3-15-2-17 1.500z" fill="#0c5ea8" />
      <circle cx="17" cy="20" r="5" fill="#d3dce4" />
    </svg>
    <div className="ml-[31px] w-[30px] h-[37px] rounded-[2px] bg-[#444] flex items-center justify-center shrink-0">
      <svg width="16" height="22" viewBox="0 0 16 22"><path d="M14 1L2 5v6l10 3-10 3v3l12-4v-6L5 8l9-3z" fill="#f7931e" /></svg>
    </div>
    <Running w="w-[51px]" ml="ml-[22px]">
      <svg width="31" height="37" viewBox="0 0 31 37">
        <ellipse cx="15.500" cy="18.500" rx="15" ry="18" fill="#7fae3f" />
        <path d="M9 9h4v11c0 3 5 3 5 0V9h4v17h-4v-2c-1 2-4 2-5 1v8h-4z" fill="#fff" />
      </svg>
      <Underline />
    </Running>
    <Running w="w-[51px]" ml="ml-[11px]">
      <svg width="28" height="34" viewBox="0 0 28 34">
        <ellipse cx="14" cy="17" rx="14" ry="17" fill="#1ed760" />
        <path d="M6 12c6-1.500 12-1 17 1.500M7 17c5-1 10-.8 14 1.500M8 22c4-.8 8-.5 11 1" stroke="#111" strokeWidth="2" fill="none" strokeLinecap="round" />
      </svg>
      <Underline />
    </Running>
    <Running w="w-[51px]" ml="ml-[11px]">
      <svg width="33" height="40" viewBox="0 0 33 40">
        <ellipse cx="16" cy="18" rx="14" ry="18" fill="#34a853" />
        <path d="M4 9C7 3 11 0 16 0c5 0 10 3 13 9H16z" fill="#ea4335" />
        <path d="M29 9c2 5 1 12-3 18l-8-9h11z" fill="#fbbc04" />
        <ellipse cx="16" cy="18" rx="7" ry="9" fill="#fff" />
        <ellipse cx="16" cy="18" rx="5" ry="7" fill="#4285f4" />
        <ellipse cx="23" cy="28" rx="10" ry="12" fill="#2d2a4a" />
        <path d="M16 24l8-2 7 3-6 3z" fill="#8a4fa8" />
        <path d="M18 31l8-2 5 2-7 3z" fill="#2f8f9e" />
      </svg>
      <Underline />
    </Running>
    <Running w="w-[61px]" ml="ml-[6px]" active>
      <ExcelLogo size={29} />
      <Underline />
    </Running>

    <svg width="30" height="34" viewBox="0 0 30 34" className="ml-[378px] shrink-0">
      <path d="M20 3h2v2h2V3h2v2h2V3h2v6l-2 2v9h2v3H18v-3h2v-9l-2-2z" fill="#9a6fc4" transform="translate(-1 -2)" />
      <circle cx="9" cy="12" r="5" fill="#2b8ad8" />
      <path d="M6 17h6l1 9 3 4v4H1v-4l3-4z" fill="#1f7cc9" />
    </svg>
    <span className="ml-[10px] text-[18px] text-[#222] [font-family:'Open_Sans',sans-serif] tracking-[-0.3px]">New games</span>
    <svg width="16" height="9" viewBox="0 0 16 9" className="ml-[33px] shrink-0"><path d="M1 8l7-7 7 7" stroke="#222" strokeWidth="1.200" fill="none" /></svg>
    <svg width="14" height="20" viewBox="0 0 14 20" className="ml-[14px] shrink-0">
      <rect x="1" y="4" width="8" height="12" rx="2" fill="none" stroke="#222" />
      <path d="M9 10l4-3v6zM3 1h5M3 19h5" stroke="#222" fill="none" />
    </svg>
    <svg width="20" height="13" viewBox="0 0 20 13" className="ml-[13px] shrink-0">
      <path d="M4 12a3.500 3.500 0 010-7c1-3 7-5 9-1 3-1 6 1 6 4s-2 4-4 4z" fill="#aaa" stroke="#333" />
    </svg>
    <svg width="22" height="24" viewBox="0 0 22 24" className="ml-[8px] shrink-0">
      <path d="M.5 3.500l19-3v19l-19 3z" fill="#fff" stroke="#222" />
      <path d="M6 9h6M6 9l2-2M11 14H6M11 14l-2 2" stroke="#222" fill="none" />
      <circle cx="16" cy="19" r="4.500" fill="#f7941d" />
    </svg>
    <svg width="20" height="14" viewBox="0 0 20 14" className="ml-[8px] shrink-0">
      <rect x="2" y="4" width="17" height="9" fill="#111" />
      <path d="M2 0v4M5 0v4" stroke="#111" />
    </svg>
    <svg width="21" height="18" viewBox="0 0 21 18" className="ml-[9px] shrink-0">
      <path d="M1 6h4l5-5v16l-5-5H1zM13 5c2 2 2 6 0 8M16 3c3 3 3 9 0 12M19 1c4 4 4 12 0 16" stroke="#222" fill="none" />
    </svg>
    <svg width="18" height="18" viewBox="0 0 18 18" className="ml-[10px] shrink-0">
      <path d="M1 17C1 9 7 2 17 1M5 17c0-5 4-10 11-11M9 17c0-3 2-6 7-6" stroke="#333" fill="none" />
      <circle cx="14" cy="16" r="1.500" fill="#222" />
    </svg>
    <span className="ml-[17px] text-[14px] text-[#222] [font-family:'Open_Sans',sans-serif] tracking-[-0.2px]">ENG</span>
    <div className="ml-[13px] w-[76px] text-center text-[14px] leading-[24px] text-[#222] [font-family:'Open_Sans',sans-serif] tracking-[-0.3px] whitespace-nowrap">
      2:07 PM<br />10/13/2023
    </div>
    <div className="ml-[20px] relative shrink-0">
      <svg width="20" height="22" viewBox="0 0 20 22">
        <path d="M0 0h20v15h-5l-3 4-2-4H0z" fill="#000" />
        <path d="M4 4h12M4 7.500h12M4 11h12" stroke="#fff" />
      </svg>
      <div className="absolute left-[9px] top-[10px] w-[20px] h-[20px] rounded-full bg-[#c9d2da] border border-[#777] flex items-center justify-center text-[14px] text-[#111]">2</div>
    </div>
  </div>
);

const App = () => (
  <div className="w-[1920px] h-[1077px] flex flex-col overflow-hidden bg-white [font-family:Roboto,sans-serif]">
    <TitleBar />
    <TabRow />
    <Ribbon />
    <FormulaBar />
    <Sheet />
    <SheetTabs />
    <StatusBar />
    <Taskbar />
  </div>
);

export default App;
